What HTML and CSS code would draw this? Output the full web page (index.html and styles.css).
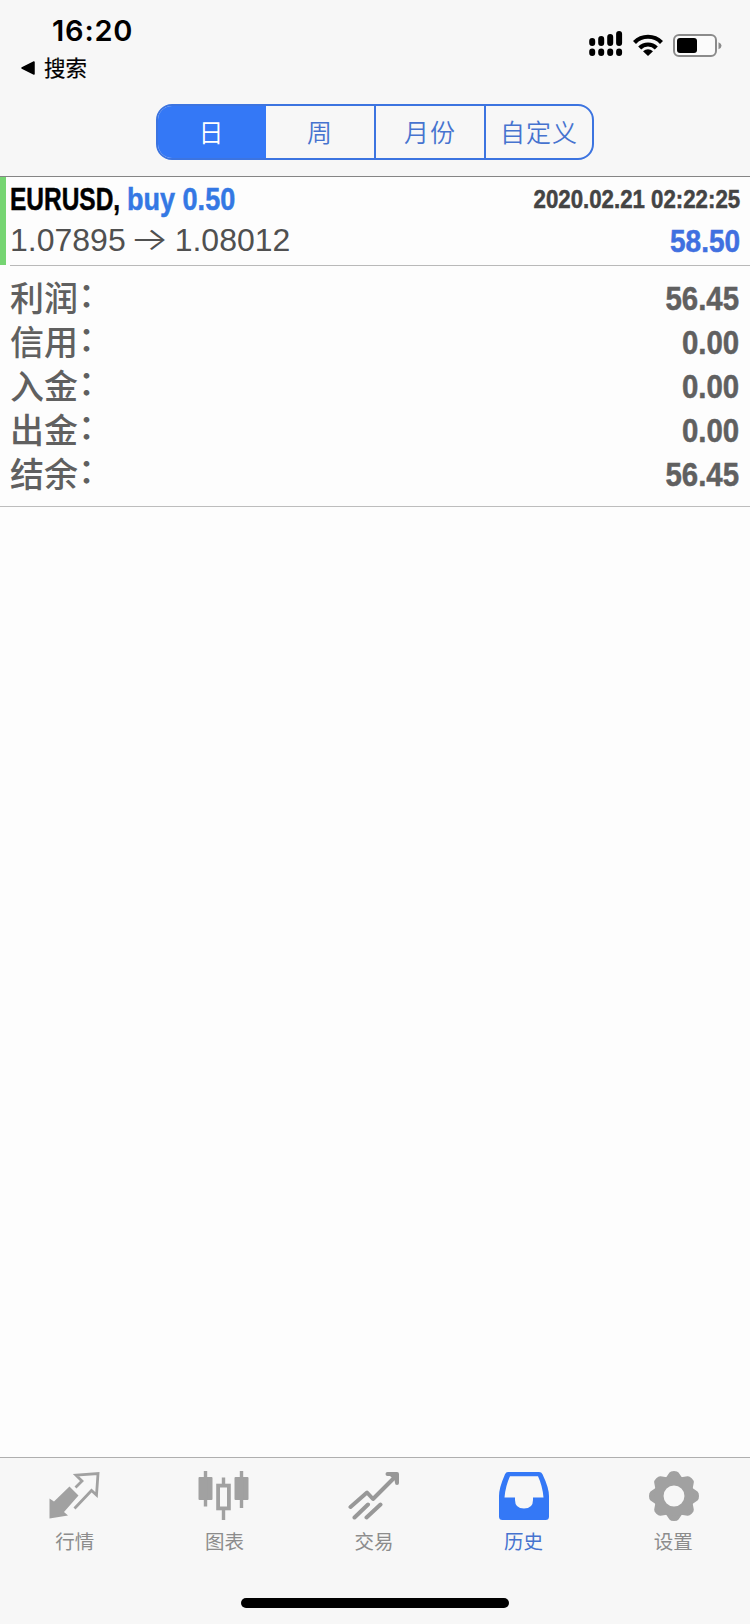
FILE: index.html
```html
<!DOCTYPE html>
<html lang="zh-CN">
<head>
<meta charset="utf-8">
<title>历史</title>
<link rel="stylesheet" href="styles.css">
</head>
<body>
<div class="app">
  <header class="header">
    <div class="status">
      <div class="status-left">
        <div class="time">16:20</div>
        <div class="back"><svg width="14" height="14" viewBox="0 0 14 14"><path d="M13 1v12L1 7z" fill="#000" stroke="#000" stroke-width="1.5" stroke-linejoin="round"/></svg><span>搜索</span></div>
      </div>
      <div class="status-icons">
        <svg width="34" height="26" viewBox="0 0 34 26">
          <g stroke="#000" stroke-width="6" stroke-linecap="round"><path d="M3.2 11v2M12.2 9v4M21.2 7v6M30.1 4v9M3.2 21.500v1.500M12.2 21.500v1.500M21.2 21.500v1.500M30.1 21.500v1.500"/></g>
        </svg>
        <svg class="wifi" width="30" height="22" viewBox="0 0 30 22">
          <g fill="none" stroke="#000" stroke-width="4.2"><path d="M1.5 8.4a19 19 0 0 1 27 0"/><path d="M6.7 14a11.6 11.6 0 0 1 16.6 0"/></g><path d="M10 17.2q5-3.8 10 0L15 22z"/>
        </svg>
        <svg width="49" height="24" viewBox="0 0 49 24">
          <rect x="1" y="1" width="42" height="21" rx="5" fill="#fbfbfb" stroke="#8b8b8b" stroke-width="2"/><rect x="4" y="4" width="20" height="15" rx="3"/><path d="M45.5 8.2q3 1.2 3 3.5t-3 3.5z" fill="#8b8b8b"/>
        </svg>
      </div>
    </div>
    <nav class="segments">
      <div class="segment selected">日</div><div class="segment">周</div><div class="segment">月份</div><div class="segment">自定义</div>
    </nav>
  </header>
  <main class="content">
    <section class="deal">
      <div class="deal-body">
        <div class="row deal-title"><div><span class="symbol">EURUSD,</span><span class="side">buy 0.50</span></div><span class="date">2020.02.21 02:22:25</span></div>
        <div class="row deal-price"><div class="prices"><span>1.07895</span><span class="arrow">→</span><span>1.08012</span></div><span class="profit">58.50</span></div>
      </div>
    </section>
    <section class="summary">
      <div class="row total"><span class="label">利润<span class="colon">：</span></span><span class="amount">56.45</span></div>
      <div class="row total"><span class="label">信用<span class="colon">：</span></span><span class="amount">0.00</span></div>
      <div class="row total"><span class="label">入金<span class="colon">：</span></span><span class="amount">0.00</span></div>
      <div class="row total"><span class="label">出金<span class="colon">：</span></span><span class="amount">0.00</span></div>
      <div class="row total"><span class="label">结余<span class="colon">：</span></span><span class="amount">56.45</span></div>
    </section>
  </main>
  <footer class="footer">
    <nav class="tabs">
      <div class="tab"><svg width="52" height="52" viewBox="1 0 52 52"><path d="M1.5 28.5l4.5 3L21.5 16.5l9 9L16 42l4 3.5L1.5 48.5z" fill="#a1a1a1"/><path d="M26.5 38.5L43.5 20.5l5 4.500L50 3.500 28 5.200l6 5.800-6.500 6.500" fill="none" stroke="#a1a1a1" stroke-width="2.8"/></svg><span>行情</span></div>
      <div class="tab"><svg width="52" height="52" viewBox="0.5 0 52 52"><g fill="#a1a1a1"><rect x="1" y="7" width="14" height="23" rx="1"/><rect x="37" y="7" width="14" height="23" rx="1"/><path d="M6.300 1h3.400v35.500H6.300zM42.300 1h3.400v37h-3.400zM24.300 7.500h3.400V14h-3.400zM24.300 39h3.400v11h-3.400z"/></g><rect x="20.600" y="15.600" width="10.800" height="22.800" fill="none" stroke="#a1a1a1" stroke-width="3.800"/></svg><span>图表</span></div>
      <div class="tab"><svg width="52" height="52" viewBox="0 0 52 52"><path d="M2.500 37L19 22.500l6 6.500L47 7M6.500 47.500L20 34.500M18.500 47.500L32.500 34.500" fill="none" stroke="#989898" stroke-width="4" stroke-linecap="round" stroke-linejoin="round"/><path d="M39.500 2H49q2 0 2 2v9q0 2-2 2t-2-2l-.5-3L42 6h-2.500q-2 0-2-2t2-2z" fill="#989898"/></svg><span>交易</span></div>
      <div class="tab active"><svg width="52" height="52" viewBox="0 0 52 52"><path fill="#3478f6" fill-rule="evenodd" d="M10 2h31q2.500 0 3.500 2.300Q51 18 51 26v20.500q0 3.500-3.500 3.500h-43Q1 50 1 46.500V26Q1 18 7 4.300 8 2 10 2zM12 6.300Q7.500 16 6.500 27.500H17V30q0 8.500 9 8.500t9-8.500v-2.500h10.500Q44.500 16 40 6.300z"/></svg><span>历史</span></div>
      <div class="tab"><svg width="52" height="52" viewBox="-27 -26 52 52"><defs><path id="tooth" d="M-9-17L-4.500-23.500Q-3.500-25 0-25T4.500-23.500L9-17z"/></defs><g fill="#a1a1a1"><use href="#tooth"/><use href="#tooth" transform="rotate(45)"/><use href="#tooth" transform="rotate(90)"/><use href="#tooth" transform="rotate(135)"/><use href="#tooth" transform="rotate(180)"/><use href="#tooth" transform="rotate(225)"/><use href="#tooth" transform="rotate(270)"/><use href="#tooth" transform="rotate(315)"/></g><circle r="15.200" fill="none" stroke="#a1a1a1" stroke-width="9.500"/></svg><span>设置</span></div>
    </nav>
    <div class="home"></div>
  </footer>
</div>
</body>
</html>
```

FILE: styles.css
```css
* { box-sizing: border-box; }
body { margin: 0; background: #fdfdfd; font-family: "Liberation Sans", "Noto Sans CJK SC", sans-serif; color: #000; }
svg { display: block; }
.app { height: 1624px; display: flex; flex-direction: column; overflow: hidden; }
.header { height: 177px; background: #f7f7f7; border-bottom: 1px solid #858585; flex: none; display: flex; flex-direction: column; align-items: center; }
.status { width: 100%; height: 104px; display: flex; justify-content: space-between; padding: 12px 28px 0 21px; flex: none; }
.time { font: 600 29px/38px Inter, sans-serif; padding-left: 31px; letter-spacing: .8px; }
.back { display: flex; align-items: center; gap: 9px; font: 400 21.5px/34px "Noto Sans CJK SC", sans-serif; height: 35px; }
.back span { margin-top: -2px; -webkit-text-stroke: .2px #000; }
.status-icons { display: flex; align-items: flex-start; padding-top: 18px; }
.status-icons svg:last-child { margin: 4px 0 0 10px; }
.wifi { margin: 4px 0 0 10px; }
.segments { width: 438px; height: 56px; display: grid; grid-template-columns: 107px 109px 110px 1fr; border: 2px solid #3c74e0; border-radius: 16px; overflow: hidden; }
.segment { border-left: 2px solid #3c74e0; color: #4673cf; font: 350 25px/50px "Noto Sans CJK SC", sans-serif; letter-spacing: 1px; text-align: center; }
.segment.selected { background: #3478f6; color: #fff; border: 0; }
.segment.selected + .segment { border-color: #3478f6; border-left-width: 1px; }
.row { display: flex; justify-content: space-between; align-items: center; }
.deal { height: 89px; display: flex; flex: none; }
.deal::before { content: ""; width: 6px; height: 88px; background: #76d572; }
.deal-body { flex: 1; margin-left: 4px; height: 89px; padding-right: 10px; border-bottom: 1px solid #b9b9b9; }
.deal-title { height: 44px; font-weight: 700; font-size: 32px; line-height: 44px; }
.symbol, .side, .date, .profit, .amount { display: inline-block; white-space: nowrap; -webkit-text-stroke: .5px currentColor; }
.symbol { width: 117px; transform: scaleX(.765); transform-origin: left; }
.side { color: #3478e4; transform: scaleX(.845); transform-origin: left; }
.date { font-size: 25px; color: #444; transform: scaleX(.89); transform-origin: right; }
.deal-price { height: 39px; font-size: 32px; line-height: 39px; color: #505050; }
.prices { display: flex; }
.arrow { width: 49px; padding-right: 2px; line-height: 36px; text-align: center; font-family: Inter, sans-serif; font-weight: 300; transform: scaleX(1.28); }
.profit { color: #4070e0; font-weight: 700; padding-top: 2px; transform: scaleX(.875); transform-origin: right; }
.summary { height: 241px; padding: 10px 11px 0 10px; border-bottom: 1px solid #bdbdbd; }
.total { height: 44px; font: 500 34px/44px "Noto Sans CJK SC", sans-serif; color: #606060; }
.label { line-height: 42px; height: 44px; }
.colon { line-height: 0; vertical-align: 4px; }
.amount { font-family: "Liberation Sans", sans-serif; font-weight: 700; transform: scaleX(.865); transform-origin: right; }
.content { flex: 1; }
.footer { height: 167px; background: #f7f7f7; border-top: 1px solid #afafaf; flex: none; display: flex; flex-direction: column; align-items: center; justify-content: space-between; padding-bottom: 16px; }
.tabs { width: 100%; padding: 12px 2px 0 0; display: grid; grid-template-columns: repeat(5, 1fr); }
.tab { display: flex; flex-direction: column; align-items: center; color: #8c8c8c; font: 400 19.5px/28px "Noto Sans CJK SC", sans-serif; gap: 5px; }
.tab.active { color: #4673cf; }
.home { width: 268px; height: 10px; border-radius: 5px; background: #000; }
```
